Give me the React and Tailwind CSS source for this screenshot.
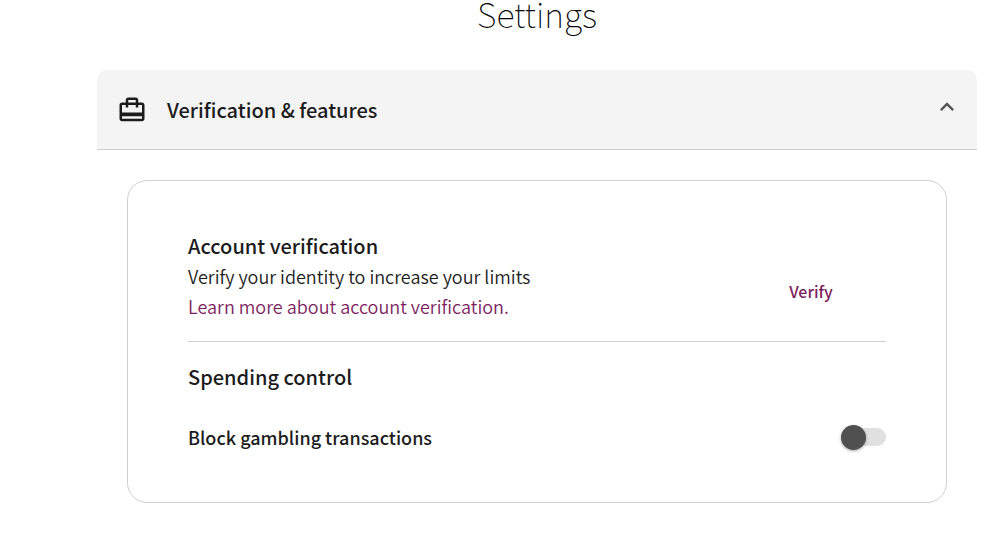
import { useState } from "react";

const BriefcaseIcon = () => (
  <svg viewBox="0 0 24 24" className="size-[30px] shrink-0 fill-current" aria-hidden="true">
    <path d="M20 6h-3V4c0-1.11-.89-2-2-2H9c-1.11 0-2 .89-2 2v2H4c-1.11 0-2 .89-2 2v11c0 1.11.89 2 2 2h16c1.11 0 2-.89 2-2V8c0-1.11-.89-2-2-2zM9 4h6v2H9V4zm11 15H4v-2h16v2zm0-5H4V8h3v2h2V8h6v2h2V8h3v6z" />
  </svg>
);

const ChevronIcon = ({ open }) => (
  <svg
    viewBox="0 0 24 24"
    className={`size-7 shrink-0 fill-[#555555] ${open ? "" : "rotate-180"}`}
    aria-hidden="true"
  >
    <path d="M12 8l-6 6 1.41 1.41L12 10.83l4.59 4.58L18 14z" />
  </svg>
);

const Toggle = ({ id, checked, onChange }) => (
  <span className="relative flex h-[25px] w-[45px] items-center">
    <input
      id={id}
      type="checkbox"
      role="switch"
      checked={checked}
      onChange={(e) => onChange(e.target.checked)}
      className="peer h-[18px] w-full cursor-pointer appearance-none rounded-full bg-[#e0e0e0] checked:bg-[#d9b8cd]"
    />
    <span className="pointer-events-none absolute left-0 size-[25px] rounded-full bg-[#505050] shadow-[0_1px_3px_rgba(0,0,0,0.35)] peer-checked:left-5 peer-checked:bg-[#7d1f5f]" />
  </span>
);

const App = () => {
  const [open, setOpen] = useState(true);
  const [blockGambling, setBlockGambling] = useState(false);

  return (
    <main className="bg-white pr-[14px] pl-[97px] font-['Noto_Sans_CJK_JP',sans-serif] text-[#1c1c1c]">
      <h1 className="h-[70px] text-center text-[34px] leading-7 font-thin text-black">Settings</h1>

      <section>
        <button
          type="button"
          aria-expanded={open}
          aria-controls="verification-panel"
          onClick={() => setOpen(!open)}
          className="flex h-20 w-full cursor-pointer items-center gap-5 rounded-t-[10px] border-b border-[#cccccc] bg-[#f4f4f4] pr-4 pl-5 text-left"
        >
          <BriefcaseIcon />
          <span className="flex-1 text-xl font-medium">Verification &amp; features</span>
          <span className="pb-1.5">
            <ChevronIcon open={open} />
          </span>
        </button>

        {open && (
          <div id="verification-panel" className="p-[30px]">
            <div className="rounded-[20px] border border-[#d0d0d0] px-[60px] py-[50px]">
              <div className="border-b border-[#d0d0d0] pb-5">
                <h2 className="text-xl leading-[30px] font-medium">Account verification</h2>
                <div className="flex items-center justify-between">
                  <div className="text-lg leading-[30px] font-[350]">
                    <p>Verify your identity to increase your limits</p>
                    <a href="#learn-more" className="block text-[#7d1f5f]">
                      Learn more about account verification.
                    </a>
                  </div>
                  <button type="button" className="w-[150px] cursor-pointer font-medium text-[#7d1f5f]">
                    Verify
                  </button>
                </div>
              </div>

              <div className="pt-5">
                <h2 className="text-xl leading-[30px] font-medium">Spending control</h2>
                <div className="mt-[30px] flex items-center justify-between">
                  <label htmlFor="block-gambling" className="text-lg leading-[30px] font-medium">
                    Block gambling transactions
                  </label>
                  <Toggle id="block-gambling" checked={blockGambling} onChange={setBlockGambling} />
                </div>
              </div>
            </div>
          </div>
        )}
      </section>
    </main>
  );
};

export default App;
